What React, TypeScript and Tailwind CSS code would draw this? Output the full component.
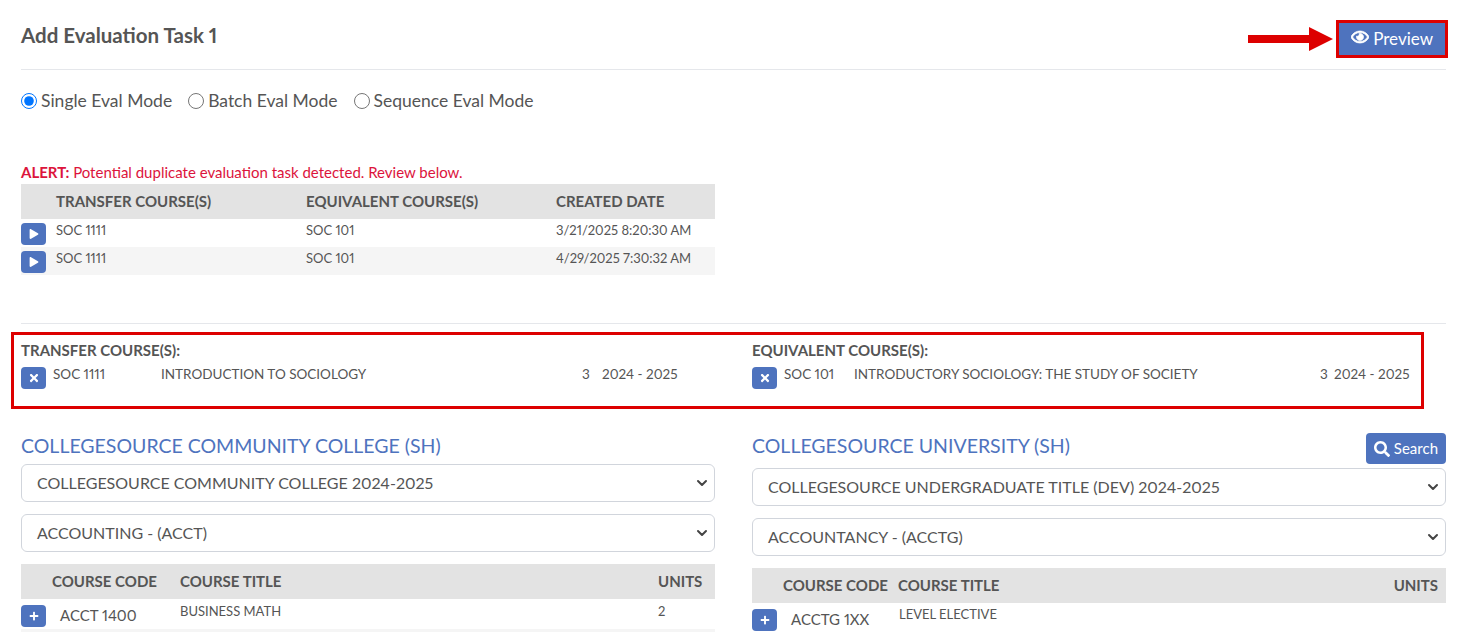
import { ChevronDown } from "lucide-react";
import { FaRegEye, FaPlay, FaTimes, FaPlus, FaSearch } from "react-icons/fa";

function IconBtn({ children }: { children: React.ReactNode }) {
  return (
    <button className="flex h-5.5 w-6.25 shrink-0 items-center justify-center rounded bg-[#4e73be] text-[10px] text-white">
      {children}
    </button>
  );
}

function Select({ value }: { value: string }) {
  return (
    <div className="relative h-9.5 rounded-md border border-gray-300 bg-white pl-3.75 text-base leading-9 text-[#555]">
      {value}
      <ChevronDown className="absolute right-1 top-2.5 size-4 text-[#444]" strokeWidth={3} />
    </div>
  );
}

function Radio({ label, checked }: { label: string; checked?: boolean }) {
  return (
    <label className="flex items-center gap-1 text-[17.5px] text-[#555]">
      <input type="radio" name="mode" defaultChecked={checked} className="size-4" />
      {label}
    </label>
  );
}

const dupes = [
  ["SOC 1111", "SOC 101", "3/21/2025 8:20:30 AM", "bg-white"],
  ["SOC 1111", "SOC 101", "4/29/2025 7:30:32 AM", "bg-[#f5f5f5]"],
];

export default function App() {
  return (
    <div className="h-screen overflow-hidden bg-white pl-[21px] pr-[23px] text-[13px] text-[#555] proportional-nums" style={{ fontFamily: '"Lato", "Liberation Sans", sans-serif' }}>
      <header className="flex items-start justify-between border-b border-gray-200 pb-2.75 pt-5">
        <h1 className="pt-px text-[20.5px] font-bold leading-7">Add Evaluation Task 1</h1>
        <div className="flex items-center">
          <svg viewBox="0 0 86 24" className="mr-0.5 h-6 w-21.5">
            <path d="M0 8h61V0l24 12-24 12v-8H0z" fill="#dd0000" />
          </svg>
          <button className="-mr-0.5 flex h-9.5 items-center gap-1 border-[3px] border-[#dd0000] bg-[#4e73be] px-3 text-[17px] text-white">
            <FaRegEye className="mb-1 text-lg" stroke="currentColor" strokeWidth={24} />
            Preview
          </button>
        </div>
      </header>

      <div className="mt-5 flex h-5.5 gap-4">
        <Radio label="Single Eval Mode" checked />
        <Radio label="Batch Eval Mode" />
        <Radio label="Sequence Eval Mode" />
      </div>

      <p className="mt-12 text-[15px] leading-6 text-[#dc143c]">
        <b>ALERT:</b> Potential duplicate evaluation task detected. Review below.
      </p>
      <div className="grid grid-cols-2 gap-9.25">
        <div>
          <div className="grid h-8.75 grid-cols-[35px_250px_250px_1fr] items-center bg-[#e3e3e3] text-[15px] font-bold">
            <span />
            <span>TRANSFER COURSE(S)</span>
            <span>EQUIVALENT COURSE(S)</span>
            <span>CREATED DATE</span>
          </div>
          {dupes.map(([a, b, c, bg]) => (
            <div key={c} className={`grid h-7 grid-cols-[35px_250px_250px_1fr] ${bg}`}>
              <div className="flex items-end pb-0.5"><IconBtn><FaPlay /></IconBtn></div>
              <span className="leading-5.5">{a}</span>
              <span className="leading-5.5">{b}</span>
              <span className="leading-5.5">{c}</span>
            </div>
          ))}
        </div>
      </div>

      <hr className="mt-12 border-gray-200" />

      <section className="-ml-2.5 mr-5.5 mt-2 flex h-19.25 border-[3px] border-[#dd0000] pl-1.75 pt-1.25">
        <div className="w-[731px]">
          <div className="text-[15px] font-bold leading-5">TRANSFER COURSE(S):</div>
          <div className="mt-1.75 flex text-[13.5px] leading-3.5">
            <IconBtn><FaTimes className="text-xs" /></IconBtn>
            <span className="ml-1.75 w-27">SOC 1111</span>
            <span className="w-[421px]">INTRODUCTION TO SOCIOLOGY</span>
            <span className="w-5">3</span>
            <span>2024 - 2025</span>
          </div>
        </div>
        <div className="flex-1">
          <div className="text-[15px] font-bold leading-5">EQUIVALENT COURSE(S):</div>
          <div className="mt-1.75 flex text-[13.5px] leading-3.5">
            <IconBtn><FaTimes className="text-xs" /></IconBtn>
            <span className="ml-1.75 w-17.5">SOC 101</span>
            <span className="w-[466px]">INTRODUCTORY SOCIOLOGY: THE STUDY OF SOCIETY</span>
            <span className="w-3.5">3</span>
            <span>2024 - 2025</span>
          </div>
        </div>
      </section>

      <div className="grid grid-cols-2 gap-9.25">
        <div>
          <div className="flex h-13.75 items-start pt-5.75">
            <h2 className="text-[19.5px] leading-7 text-[#4e73be]">COLLEGESOURCE COMMUNITY COLLEGE (SH)</h2>
          </div>
          <Select value="COLLEGESOURCE COMMUNITY COLLEGE 2024-2025" />
          <div className="mt-3"><Select value="ACCOUNTING - (ACCT)" /></div>
          <div className="mt-3 grid h-8.75 grid-cols-[31px_128px_1fr_57px] items-center bg-[#e3e3e3] text-[15px] font-bold">
            <span />
            <span>COURSE CODE</span>
            <span>COURSE TITLE</span>
            <span>UNITS</span>
          </div>
          <div className="grid h-7.5 grid-cols-[39px_120px_1fr_57px]">
            <div className="pt-1.5"><IconBtn><FaPlus /></IconBtn></div>
            <span className="text-[15px] leading-8">ACCT 1400</span>
            <span className="leading-6">BUSINESS MATH</span>
            <span className="leading-6">2</span>
          </div>
          <div className="h-4 bg-[#f5f5f5]" />
        </div>
        <div>
          <div className="flex h-14.75 items-start justify-between pt-6">
            <h2 className="text-[19.5px] leading-6.5 text-[#4e73be]">COLLEGESOURCE UNIVERSITY (SH)</h2>
            <button className="flex h-7.75 items-center gap-1 rounded bg-[#4e73be] px-2 text-[15px] text-white">
              <FaSearch className="text-base" />
              Search
            </button>
          </div>
          <Select value="COLLEGESOURCE UNDERGRADUATE TITLE (DEV) 2024-2025" />
          <div className="mt-3"><Select value="ACCOUNTANCY - (ACCTG)" /></div>
          <div className="mt-3 grid h-8.75 grid-cols-[31px_115px_1fr_auto] items-center bg-[#e3e3e3] pr-2 text-[15px] font-bold">
            <span />
            <span>COURSE CODE</span>
            <span>COURSE TITLE</span>
            <span>UNITS</span>
          </div>
          <div className="grid h-8 grid-cols-[39px_108px_1fr]">
            <div className="pt-1.5"><IconBtn><FaPlus /></IconBtn></div>
            <span className="text-[15px] leading-8">ACCTG 1XX</span>
            <span className="leading-5.5">LEVEL ELECTIVE</span>
          </div>
        </div>
      </div>
    </div>
  );
}
